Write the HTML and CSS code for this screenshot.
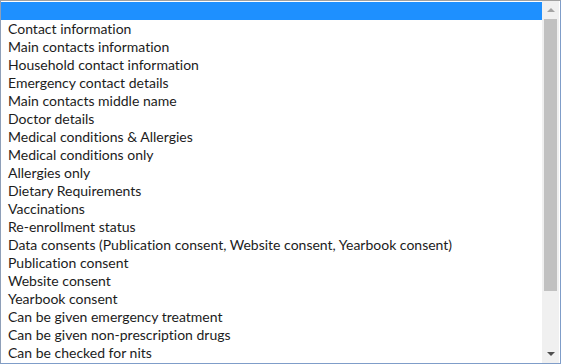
FILE: index.html
```html
<!DOCTYPE html>
<html>
<head>
<meta charset="utf-8">
<link rel="stylesheet" href="styles.css">
</head>
<body>
<div class="listbox">
  <div class="options">
    <div class="option selected">&nbsp;</div>
    <div class="option">Contact information</div>
    <div class="option">Main contacts information</div>
    <div class="option">Household contact information</div>
    <div class="option">Emergency contact details</div>
    <div class="option">Main contacts middle name</div>
    <div class="option">Doctor details</div>
    <div class="option">Medical conditions &amp; Allergies</div>
    <div class="option">Medical conditions only</div>
    <div class="option">Allergies only</div>
    <div class="option">Dietary Requirements</div>
    <div class="option">Vaccinations</div>
    <div class="option">Re-enrollment status</div>
    <div class="option">Data consents (Publication consent, Website consent, Yearbook consent)</div>
    <div class="option">Publication consent</div>
    <div class="option">Website consent</div>
    <div class="option">Yearbook consent</div>
    <div class="option">Can be given emergency treatment</div>
    <div class="option">Can be given non-prescription drugs</div>
    <div class="option">Can be checked for nits</div>
  </div>
  <div class="scrollbar">
    <div class="arrow up"></div>
    <div class="track"><div class="thumb"></div></div>
    <div class="arrow down"></div>
  </div>
</div>
</body>
</html>
```

FILE: styles.css
```css
html, body {
  margin: 0;
  padding: 0;
  background: #ffffff;
}
.listbox {
  box-sizing: border-box;
  width: 561px;
  height: 364px;
  border: 1px solid #7f9dc9;
  border-top-color: #a0a0a0;
  border-left-color: #8e9fb8;
  display: flex;
  overflow: hidden;
  background: #fff;
}
.options {
  flex: 1;
  overflow: hidden;
  padding-top: 1px;
  font-family: Lato, "Open Sans", sans-serif;
  font-size: 14px;
  font-variant-ligatures: none;
  color: #1c1c1c;
}
.option {
  height: 18px;
  line-height: 18px;
  padding-left: 7px;
  white-space: nowrap;
}
.option.selected {
  background: #1e90ff;
}
.scrollbar {
  width: 17px;
  margin-right: 1px;
  background: #f0f0f0;
  display: flex;
  flex-direction: column;
}
.arrow {
  height: 18px;
  display: flex;
  align-items: center;
  justify-content: center;
}
.arrow::before {
  content: "";
  width: 0;
  height: 0;
  border-left: 4px solid transparent;
  border-right: 4px solid transparent;
}
.arrow.up::before {
  border-bottom: 4px solid #a3a3a3;
}
.arrow.down::before {
  border-top: 4px solid #505050;
}
.track {
  flex: 1;
  display: flex;
  flex-direction: column;
  padding: 0 2px;
}
.thumb {
  height: 272px;
  background: #c1c1c1;
}
```
